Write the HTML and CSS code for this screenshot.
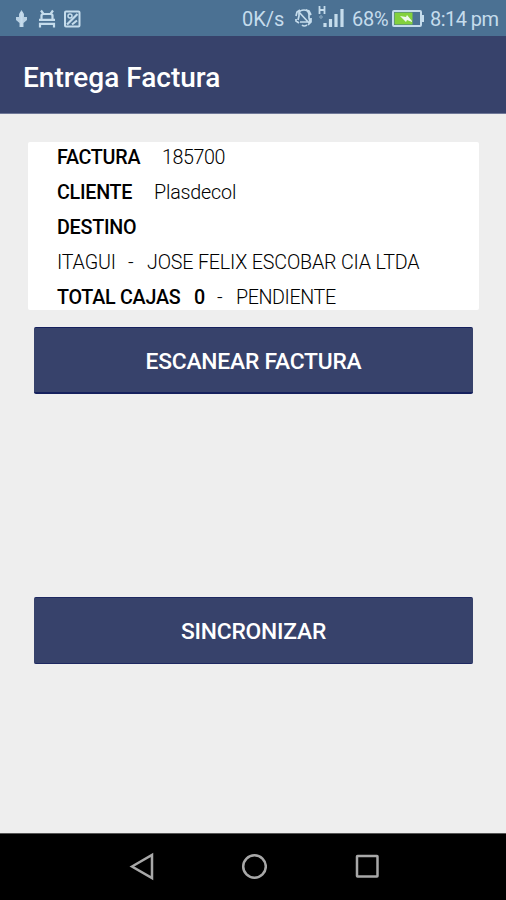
FILE: index.html
```html
<!DOCTYPE html>
<html lang="es">
<head>
<meta charset="utf-8">
<title>Entrega Factura</title>
<link rel="stylesheet" href="styles.css">
</head>
<body>
<div class="status">
  <svg class="status-left" width="70" height="24" viewBox="0 0 70 24" fill="none" stroke="#c5dcec" stroke-width="2">
    <path d="M8.500 6v15" stroke-width="2.200"/>
    <path d="M8.500 4l2.500 4v3h3v3l-3.500 3v4h-4v-4L3 14v-3h3V8z" fill="#c5dcec" stroke="none" opacity=".9"/>
    <path d="M28 4.500l2.500 3.500M40 4.500L37.500 8M28.500 13.500V9.500q0-1.500 2-1.500h7q2 0 2 1.500v4M26 13.800h16M27 21.500V17.800h14v3.700" stroke-width="2.200"/>
    <rect x="52" y="5.500" width="14.500" height="15" rx="1"/>
    <path d="M54 18.500L64.500 8M59 18.500l5-4" stroke-width="2.200"/>
    <circle cx="57" cy="10" r="2" stroke-width="1.500"/>
  </svg>
  <span class="speed">0K/s</span>
  <svg class="signal" width="56" height="30" viewBox="0 0 56 30" fill="none" stroke="#c5dcec" stroke-width="2">
    <path d="M5 20l1-4v-3q1-3 5-3 4 0 5 4v4l1 4H7M9 25q2 2 5 0M5 11l12 13M3 16l1-4 3-2M13 10l3 1 2 4M3 19v2l3 2M18 18v4l-3 3" stroke-width="1.700"/>
    <path d="M26.500 6v8M31.500 6v8M26.500 10h5" stroke-width="1.800"/>
    <path d="M32 23v4M37.500 19v8M43 14v13M49 9v18" stroke-width="3.200"/>
    <path d="M26 17h4M28 15v4" stroke-width="1.500" opacity=".4"/>
  </svg>
  <span class="percent">68%</span>
  <svg class="battery" width="32" height="20" viewBox="0 0 32 20">
    <rect x="1" y="2" width="28" height="15" rx="1" fill="#4b7295" stroke="#c5dcec" stroke-width="2"/>
    <path d="M2.500 3.500h18v12h-18z" fill="#83d13d"/>
    <path d="M29 6h3v7h-3z" fill="#c5dcec"/>
    <path d="M8 7l6 1 1-2 5 6v1l-5-2-1 2z" fill="#eef8ed"/>
  </svg>
  <span class="time">8:14 pm</span>
</div>
<header class="bar"><h1>Entrega Factura</h1></header>
<main>
  <section class="card">
    <p><b class="w-factura">FACTURA</b><span class="v-num">185700</span></p>
    <p><b class="w-cliente">CLIENTE</b><span class="v-name">Plasdecol</span></p>
    <p><b>DESTINO</b></p>
    <p><span class="city">ITAGUI</span><span class="dash">-</span><span class="company">JOSE FELIX ESCOBAR CIA LTDA</span></p>
    <p><b class="total">TOTAL CAJAS</b><b class="count">0</b><span class="dash2">-</span><span class="state">PENDIENTE</span></p>
  </section>
  <button class="scan">ESCANEAR FACTURA</button>
  <button class="sync">SINCRONIZAR</button>
</main>
<nav>
  <svg width="26" height="30" viewBox="0 0 26 30"><path d="M4 14.500L24 3v23z"/></svg>
  <svg width="26" height="30" viewBox="0 0 26 30"><circle cx="13.500" cy="14.500" r="11.300"/></svg>
  <svg width="26" height="30" viewBox="0 0 26 30"><rect x="3" y="4" width="20.500" height="20.500" rx=".5"/></svg>
</nav>
</body>
</html>
```
FILE: styles.css
```css
* { box-sizing: border-box; }
body { margin: 0; width: 506px; height: 900px; display: flex; flex-direction: column; background: #eee; font-family: Roboto, "Liberation Sans", sans-serif; overflow: hidden; }
.status { height: 36px; flex: none; display: flex; align-items: center; background: #4b7193; color: #c5dcec; font-size: 20px; line-height: 36px; white-space: pre; padding-top: 2px; }
.status span { flex: none; }
.status svg { flex: none; }
.status-left { margin: -3px 0 0 13px; }
.speed { width: 43px; margin-left: 159px; }
.signal { width: 56px; margin: -8px 0 0 8px; }
.percent { width: 38px; margin-left: 3px; letter-spacing: -.2px; }
.battery { margin-left: 2px; }
.time { margin-left: 6px; font-size: 20px; letter-spacing: -.55px; }
.bar { height: 78px; flex: none; background: #37426b; border-bottom: 1px solid #6f7898; padding-left: 23px; display: flex; align-items: center; }
h1 { margin: 6px 0 0; color: #fff; font-size: 28px; font-weight: 500; line-height: 40px; white-space: nowrap; }
main { flex: 1; display: flex; flex-direction: column; padding: 28px 33px 0 34px; }
.card { height: 168px; flex: none; margin: 0 -6px; padding-left: 29px; display: flex; flex-direction: column; justify-content: center; background: #fff; border-radius: 2px; color: #000; font-size: 19.700px; letter-spacing: -.18px; }
.card p { margin: 0; height: 35px; flex: none; line-height: 37px; display: flex; white-space: nowrap; font-weight: 300; }
.card b { font-weight: 500; letter-spacing: -.25px; }
.v-num { letter-spacing: -.4px; }
.w-factura { width: 105px; }
.w-cliente { width: 97px; }
.city { width: 71px; }
.dash { width: 19px; }
.total { width: 137px; }
.count { width: 23px; }
.dash2 { width: 19px; }
.state { letter-spacing: -.4px; }
button { height: 67px; flex: none; border: 1px solid #1d2861; border-width: 1px 0 2px; border-radius: 2px; background: #37426b; color: #fff; font: 500 22.800px Roboto, sans-serif; letter-spacing: -.2px; padding: 2px 0 0; }
.scan { margin-top: 17px; border-color: #15205d; }
.sync { margin-top: 203px; border-bottom-width: 1px; }
nav { height: 67px; flex: none; background: #000; border-top: 1px solid #555; display: flex; justify-content: center; align-items: center; gap: 87px; padding-left: 2px; }
nav svg { fill: none; stroke: #a8a8a8; stroke-width: 2.500; }
```
